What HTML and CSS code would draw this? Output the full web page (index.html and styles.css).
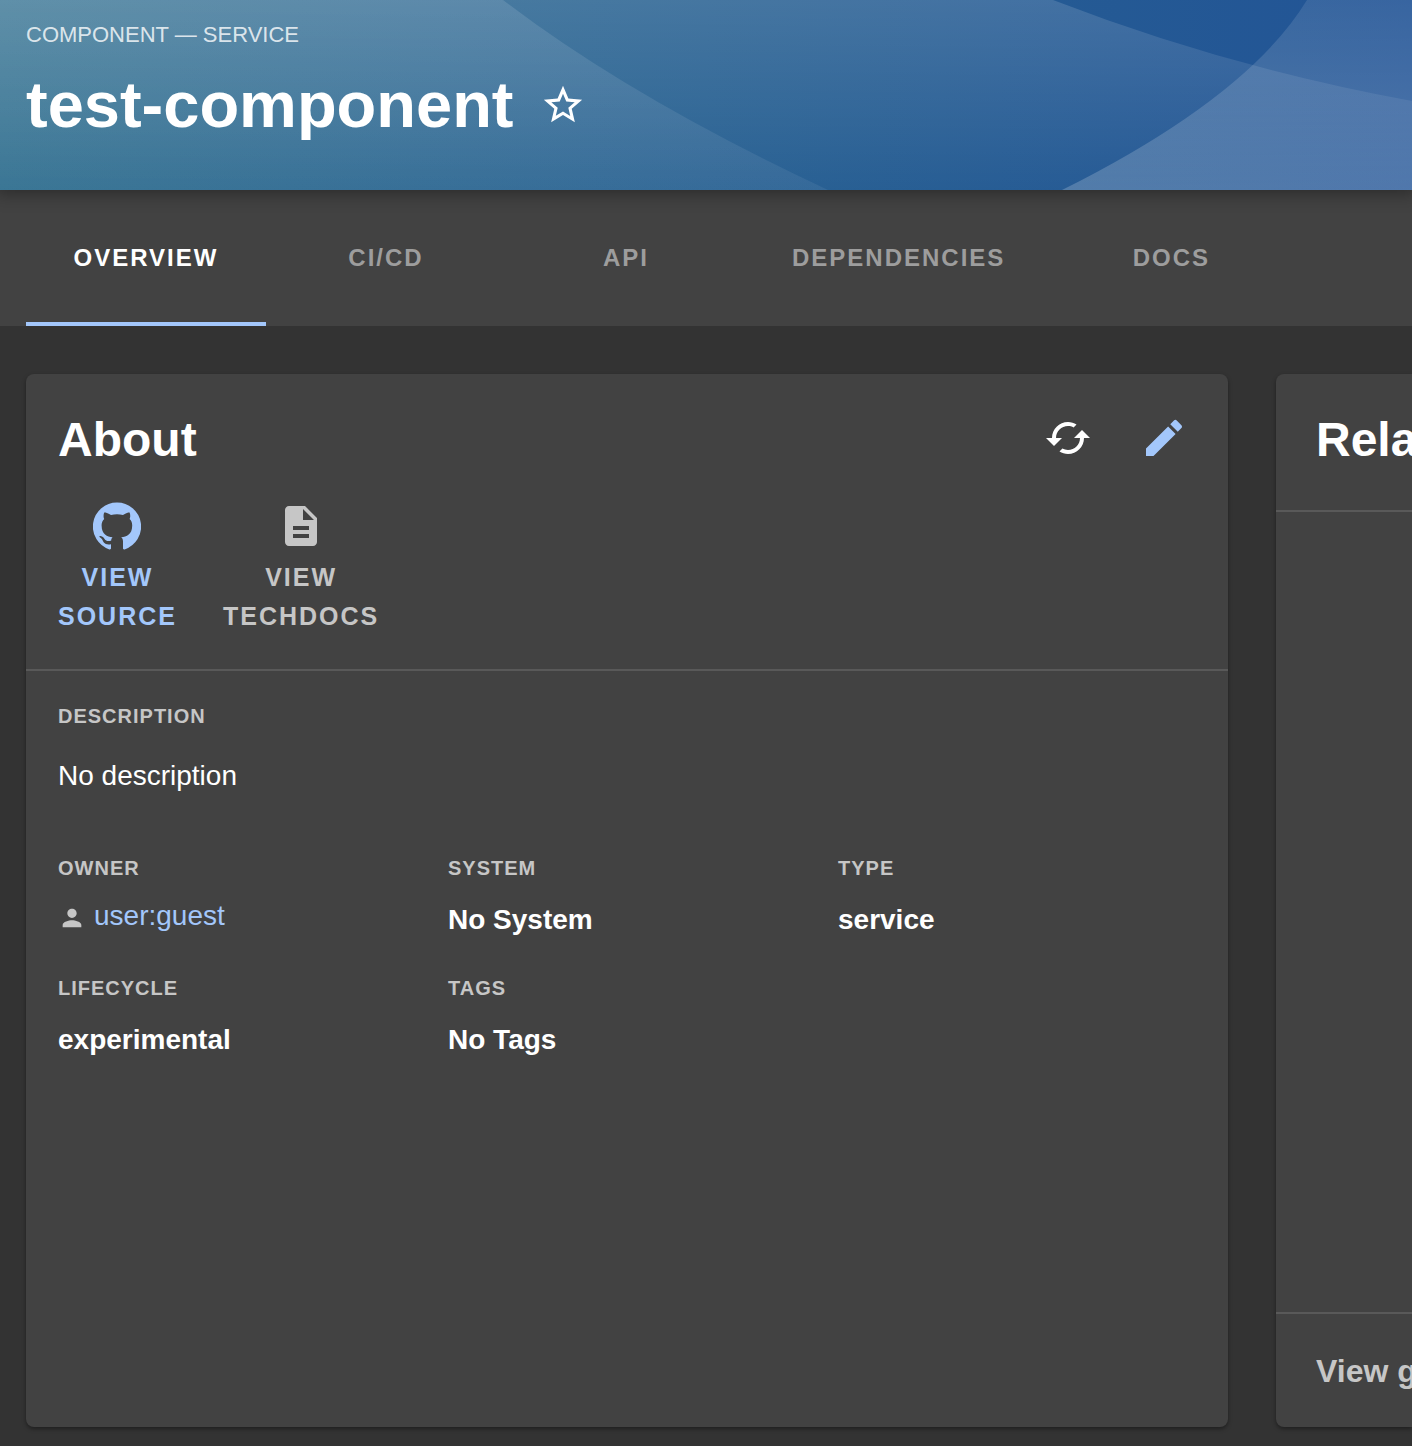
FILE: index.html
```html
<!DOCTYPE html>
<html lang="en">
<head>
<meta charset="utf-8">
<meta name="viewport" content="width=device-width, initial-scale=1">
<title>test-component</title>
<link rel="stylesheet" href="styles.css">
</head>
<body>
<header class="hero">
  <svg class="hero-waves" viewBox="0 0 1412 190" preserveAspectRatio="none" aria-hidden="true">
    <defs>
      <linearGradient id="wave-left" x1="0" y1="0" x2="0" y2="190" gradientUnits="userSpaceOnUse">
        <stop offset="0" stop-color="#fff" stop-opacity=".12"/>
        <stop offset="1" stop-color="#fff" stop-opacity=".06"/>
      </linearGradient>
      <linearGradient id="wave-middle" x1="0" y1="0" x2="0" y2="190" gradientUnits="userSpaceOnUse">
        <stop offset="0" stop-color="#fff" stop-opacity=".14"/>
        <stop offset="1" stop-color="#fff" stop-opacity=".01"/>
      </linearGradient>
      <linearGradient id="wave-right" x1="0" y1="0" x2="0" y2="190" gradientUnits="userSpaceOnUse">
        <stop offset="0" stop-color="#fff" stop-opacity=".1"/>
        <stop offset="1" stop-color="#fff" stop-opacity=".2"/>
      </linearGradient>
    </defs>
    <path fill="url(#wave-left)" d="M0 0H503Q631 98 828 190H0Z"/>
    <path fill="url(#wave-middle)" d="M0 0H1053Q1226 67 1412 101V190H0Z"/>
    <path fill="url(#wave-right)" d="M1412 0H1307Q1248 97 1062 190H1412Z"/>
  </svg>
  <p class="hero-type">COMPONENT — SERVICE</p>
  <div class="hero-title-row">
    <h1 class="hero-title">test-component</h1>
    <button class="icon-button" type="button" aria-label="Add to favorites">
      <svg class="icon icon-star" viewBox="0 0 24 24"><path d="M22 9.24l-7.19-.62L12 2 9.19 8.63 2 9.24l5.46 4.73L5.82 21 12 17.27 18.18 21l-1.63-7.03L22 9.24zM12 15.4l-3.76 2.27 1-4.28-3.32-2.88 4.38-.38L12 6.1l1.71 4.04 4.38.38-3.32 2.88 1 4.28L12 15.4z"/></svg>
    </button>
  </div>
</header>

<nav class="tabs">
  <button class="tab tab-active" type="button" aria-current="page">OVERVIEW</button>
  <button class="tab" type="button">CI/CD</button>
  <button class="tab" type="button">API</button>
  <button class="tab" type="button">DEPENDENCIES</button>
  <button class="tab" type="button">DOCS</button>
</nav>

<main class="content">
  <section class="card">
    <div class="card-header">
      <h2 class="card-title">About</h2>
      <div class="card-actions">
        <button class="icon-button" type="button" aria-label="Refresh">
          <svg class="icon" viewBox="0 0 24 24"><path d="M19 8l-4 4h3c0 3.31-2.69 6-6 6-1.01 0-1.97-.25-2.8-.7l-1.46 1.46C8.97 19.54 10.43 20 12 20c4.42 0 8-3.58 8-8h3l-4-4zM6 12c0-3.31 2.69-6 6-6 1.01 0 1.97.25 2.8.7l1.46-1.46C15.03 4.46 13.57 4 12 4c-4.42 0-8 3.58-8 8H1l4 4 4-4H6z"/></svg>
        </button>
        <a class="icon-button link" href="#" aria-label="Edit">
          <svg class="icon" viewBox="0 0 24 24"><path d="M3 17.25V21h3.75L17.81 9.94l-3.75-3.75L3 17.25zM20.71 7.04c.39-.39.39-1.02 0-1.41l-2.34-2.34a.9959.9959 0 0 0-1.41 0l-1.83 1.83 3.75 3.75 1.83-1.83z"/></svg>
        </a>
      </div>
    </div>
    <div class="quick-links">
      <a class="quick-link link" href="#">
        <svg class="icon" viewBox="0 0 24 24"><path d="M12 .3a12 12 0 0 0-3.8 23.4c.6.1.8-.3.8-.6v-2c-3.3.7-4-1.6-4-1.6-.6-1.4-1.4-1.8-1.4-1.8-1-.7.1-.7.1-.7 1.2 0 1.9 1.2 1.9 1.2 1 1.8 2.8 1.3 3.5 1 0-.8.4-1.3.7-1.6-2.7-.3-5.5-1.3-5.5-6 0-1.2.5-2.3 1.3-3.1-.2-.4-.6-1.6 0-3.2 0 0 1-.3 3.4 1.2a11.5 11.5 0 0 1 6 0c2.3-1.5 3.3-1.2 3.3-1.2.6 1.6.2 2.8 0 3.2.9.8 1.3 1.9 1.3 3.2 0 4.6-2.8 5.6-5.5 5.9.5.4.9 1 .9 2.2v3.3c0 .3.1.7.8.6A12 12 0 0 0 12 .3"/></svg>
        VIEW SOURCE
      </a>
      <a class="quick-link" href="#">
        <svg class="icon" viewBox="0 0 24 24"><path d="M14 2H6c-1.1 0-1.99.9-1.99 2L4 20c0 1.1.89 2 1.99 2H18c1.1 0 2-.9 2-2V8l-6-6zm2 16H8v-2h8v2zm0-4H8v-2h8v2zm-3-5V3.5L18.5 9H13z"/></svg>
        VIEW TECHDOCS
      </a>
    </div>
    <dl class="facts">
      <div class="fact fact-wide">
        <dt class="fact-label">DESCRIPTION</dt>
        <dd class="fact-value fact-text">No description</dd>
      </div>
      <div class="fact">
        <dt class="fact-label">OWNER</dt>
        <dd class="fact-value fact-owner">
          <svg class="icon-person" viewBox="0 0 24 24" aria-hidden="true"><path d="M12 12c2.210 0 4-1.790 4-4s-1.790-4-4-4-4 1.790-4 4 1.790 4 4 4zm0 2c-2.670 0-8 1.340-8 4v2h16v-2c0-2.660-5.330-4-8-4z"/></svg>
          <a class="link" href="#">user:guest</a>
        </dd>
      </div>
      <div class="fact">
        <dt class="fact-label">SYSTEM</dt>
        <dd class="fact-value">No System</dd>
      </div>
      <div class="fact">
        <dt class="fact-label">TYPE</dt>
        <dd class="fact-value">service</dd>
      </div>
      <div class="fact">
        <dt class="fact-label">LIFECYCLE</dt>
        <dd class="fact-value">experimental</dd>
      </div>
      <div class="fact">
        <dt class="fact-label">TAGS</dt>
        <dd class="fact-value">No Tags</dd>
      </div>
    </dl>
  </section>

  <section class="card card-edge">
    <h2 class="card-title relations-title">Relations</h2>
    <div class="relations-graph"></div>
    <a class="relations-more" href="#">View graph</a>
  </section>
</main>
</body>
</html>
```

FILE: styles.css
```css
* {
  box-sizing: border-box;
}

body {
  display: flex;
  flex-direction: column;
  min-height: 100vh;
  margin: 0;
  overflow-x: hidden;
  background: #333;
  color: #fff;
  font-family: "Liberation Sans", Arial, sans-serif;
  font-size: 28px;
  line-height: 40px;
}

h1, h2, p, dl, dd {
  margin: 0;
}

a {
  color: inherit;
  text-decoration: none;
}

button {
  padding: 0;
  border: 0;
  background: none;
  color: inherit;
  font: inherit;
  cursor: pointer;
}

.link {
  color: #a3c7fb;
}

.icon {
  display: block;
  width: 48px;
  height: 48px;
  fill: currentColor;
}

.icon-button {
  display: block;
}

/* Header */
.hero {
  position: relative;
  z-index: 1;
  padding: 21px 26px 45px;
  background: linear-gradient(90deg, #2c6c8d, #225496);
  box-shadow: 0 0 16px 4px rgba(0, 0, 0, .35);
}

.hero-waves {
  position: absolute;
  inset: 0;
  z-index: -1;
  width: 100%;
  height: 100%;
}

.hero-type {
  color: rgba(255, 255, 255, .8);
  font-size: 22px;
  line-height: 28px;
}

.hero-title-row {
  display: flex;
  align-items: center;
  gap: 26px;
  padding-top: 16px;
}

.hero-title {
  font-size: 65px;
  line-height: 80px;
}

.icon-star {
  width: 46px;
  height: 46px;
}

/* Tabs */
.tabs {
  display: flex;
  padding: 0 26px;
  background: #424242;
}

.tab {
  min-width: 240px;
  height: 136px;
  padding: 4px 46px 0;
  border-bottom: 4px solid transparent;
  color: #9d9d9d;
  font-size: 24px;
  font-weight: 700;
  letter-spacing: 2px;
  white-space: nowrap;
}

.tab-active {
  border-color: #a3c7fb;
  color: #fff;
}

/* Cards */
.content {
  display: grid;
  flex: 1;
  grid-template-columns: minmax(0, 1fr) 136px;
  gap: 48px;
  padding: 48px 0 19px 26px;
}

.card {
  display: flex;
  flex-direction: column;
  border-radius: 8px;
  background: #424242;
  box-shadow: 0 2px 4px rgba(0, 0, 0, .4);
}

.card-edge {
  border-radius: 8px 0 0 8px;
  overflow: hidden;
}

.card-header {
  display: flex;
  align-items: center;
  justify-content: space-between;
  padding: 32px 40px 32px 32px;
}

.card-title {
  padding-top: 4px;
  font-size: 48px;
  line-height: 60px;
}

.card-actions {
  display: flex;
  gap: 48px;
}

.quick-links {
  display: flex;
  gap: 46px;
  padding: 0 32px 33px;
  border-bottom: 2px solid #595959;
}

.quick-link {
  width: min-content;
  color: #c6c6c6;
  font-size: 25px;
  font-weight: 700;
  letter-spacing: 2px;
  line-height: 39px;
  text-align: center;
}

.quick-link.link {
  color: #a3c7fb;
}

.quick-link .icon {
  margin: 0 auto 8px;
}

/* Facts */
.facts {
  display: grid;
  grid-template-columns: repeat(3, 1fr);
  row-gap: 34px;
  padding: 31px 0 32px 32px;
}

.fact-wide {
  grid-column: 1 / -1;
  padding-bottom: 24px;
}

.fact-label {
  color: #c6c6c6;
  font-size: 20px;
  font-weight: 700;
  letter-spacing: 1px;
  line-height: 28px;
}

.fact-value {
  padding-top: 18px;
  font-weight: 700;
}

.fact-text {
  padding-top: 26px;
  font-weight: 400;
}

.fact-owner {
  display: flex;
  align-items: flex-end;
  gap: 8px;
  padding-top: 14px;
  font-weight: 400;
}

.icon-person {
  width: 28px;
  height: 28px;
  margin-bottom: 4px;
  fill: #c6c6c6;
}

/* Relations */
.relations-title {
  padding: 36px 40px 40px;
  border-bottom: 2px solid #595959;
  white-space: nowrap;
}

.relations-graph {
  flex: 1;
}

.relations-more {
  padding: 37px 40px 36px;
  border-top: 2px solid #595959;
  color: #c6c6c6;
  font-size: 32px;
  font-weight: 700;
  white-space: nowrap;
}
```
